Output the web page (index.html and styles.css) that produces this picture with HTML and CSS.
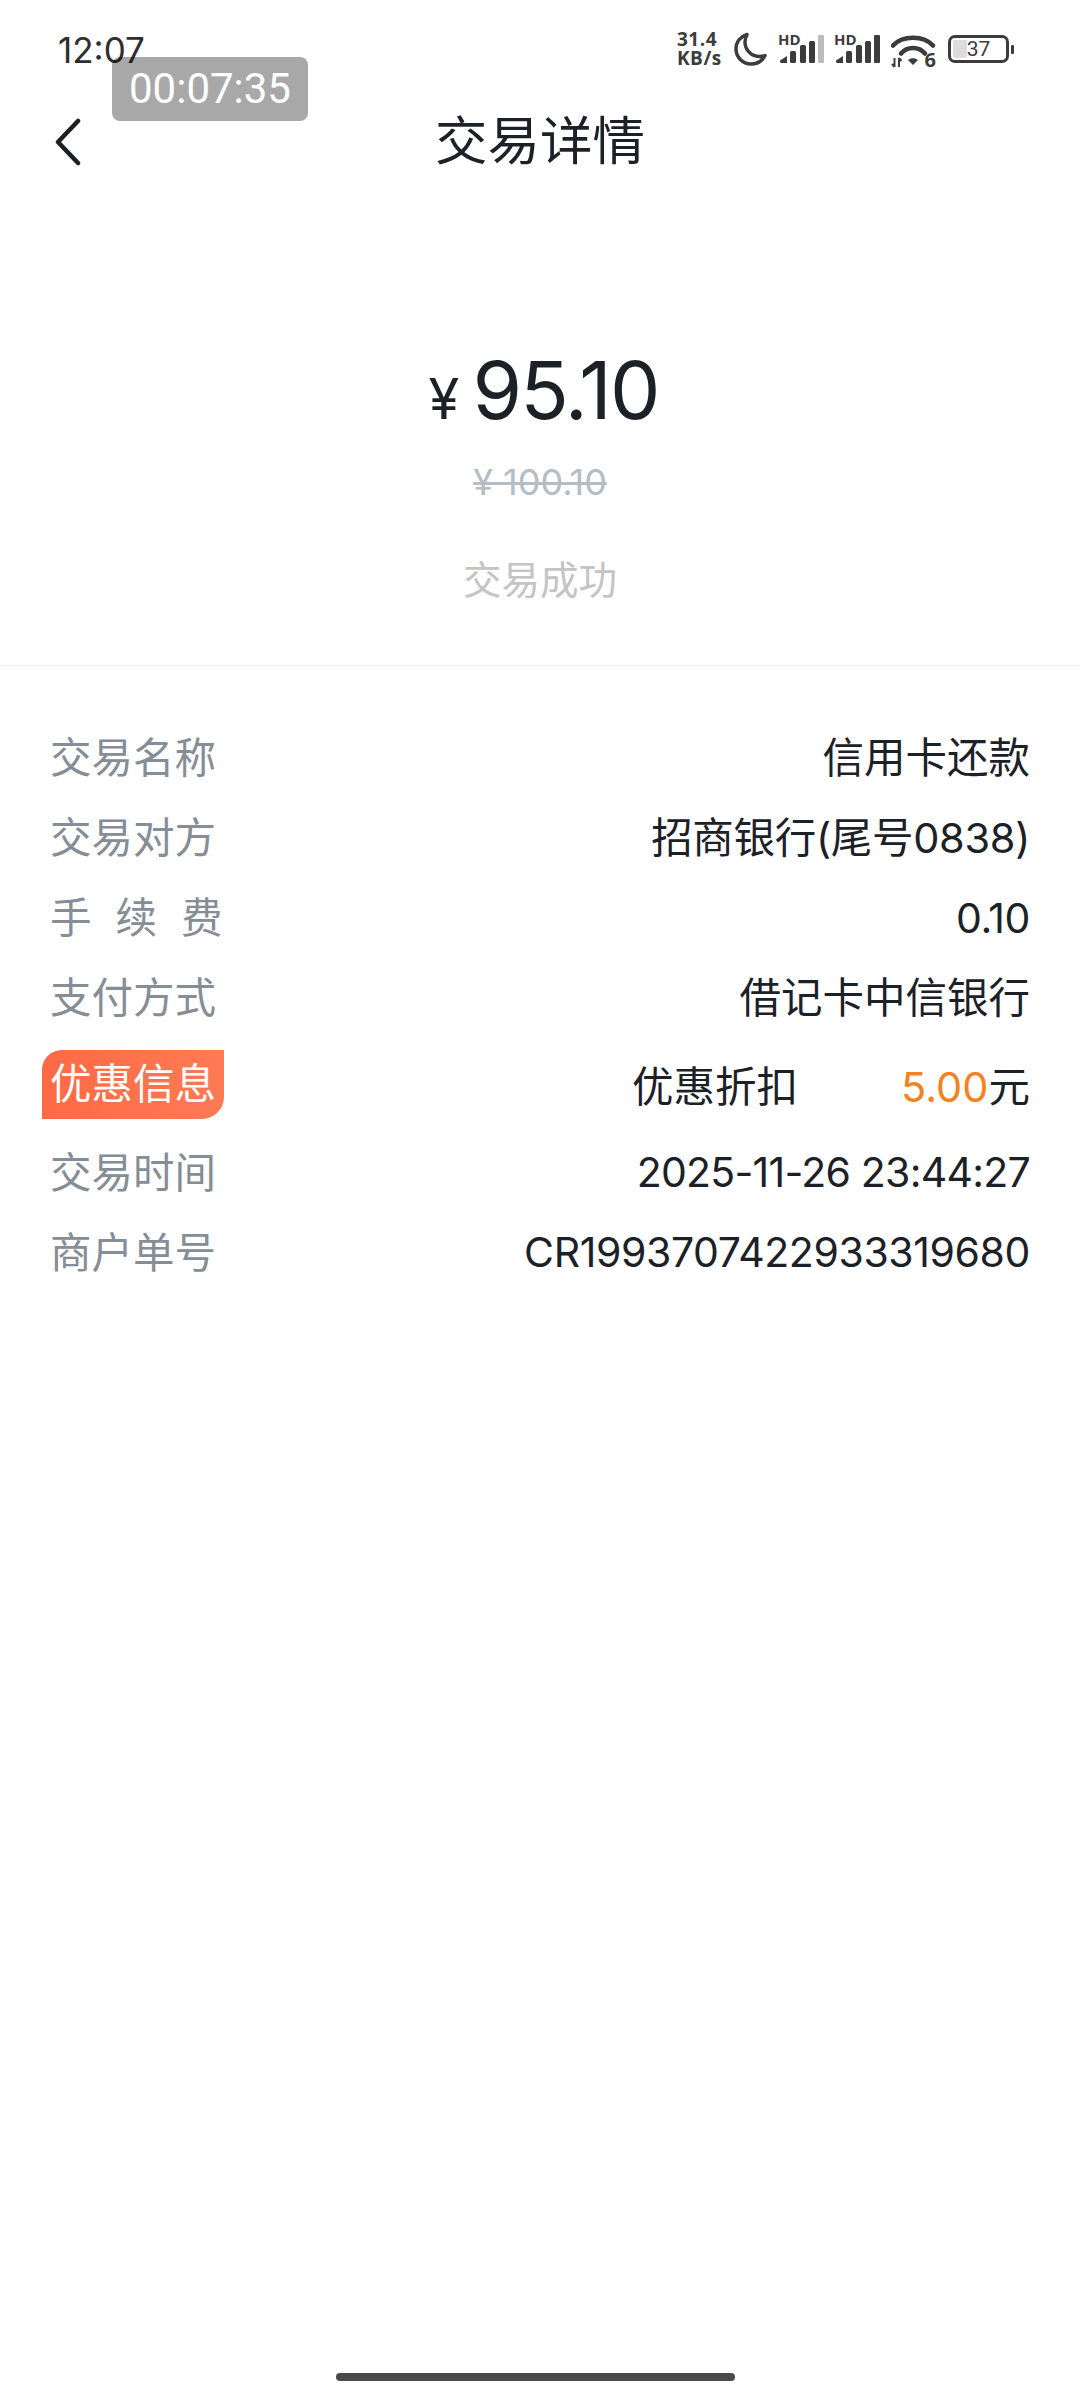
FILE: index.html
```html
<!DOCTYPE html>
<html lang="zh-CN">
<head>
    <meta charset="UTF-8">
    <meta name="viewport" content="width=device-width, initial-scale=1.0">
    <title>交易详情</title>
    <link rel="stylesheet" href="styles.css">
</head>
<body>
    <div class="pagina">
        <div class="estado">
            <span class="hora">12:07</span>
            <div class="iconos">
                <div class="velocidad"><span>31.4</span><span>KB/s</span></div>
                <svg class="luna" width="33" height="34" viewBox="0 0 33 34">
                    <path d="M13 2.500C6.500 4.500 2 10 2 17c0 8 6.500 15 15 15 6.500 0 11.500-3.500 14-8.500-1.500.6-3.500 1-5.500 1C17.500 24.500 11 18 11 10c0-2.700.7-5.300 2-7.500Z" fill="none" stroke="#3c3c3c" stroke-width="3.500" stroke-linejoin="round"/>
                </svg>
                <div class="senal">
                    <span class="hd">HD</span>
                    <svg width="46" height="32" viewBox="0 0 46 32">
                        <path d="M2 27.500 9 23v7H3.500A1.500 1.500 0 0 1 2 28.500Z" fill="#3c3c3c"/>
                        <rect x="12" y="18" width="6" height="12" rx="1.500" fill="#3c3c3c"/>
                        <rect x="22" y="12" width="6" height="18" rx="1.500" fill="#3c3c3c"/>
                        <rect x="31" y="8" width="6" height="22" rx="1.500" fill="#3c3c3c"/>
                        <rect x="40" y="2" width="6" height="28" rx="1" fill="#bcbcbc"/>
                    </svg>
                </div>
                <div class="senal">
                    <span class="hd">HD</span>
                    <svg width="46" height="32" viewBox="0 0 46 32">
                        <path d="M2 27.500 9 23v7H3.500A1.500 1.500 0 0 1 2 28.500Z" fill="#3c3c3c"/>
                        <rect x="12" y="18" width="6" height="12" rx="1.500" fill="#3c3c3c"/>
                        <rect x="22" y="12" width="6" height="18" rx="1.500" fill="#3c3c3c"/>
                        <rect x="31" y="8" width="6" height="22" rx="1.500" fill="#3c3c3c"/>
                        <rect x="40" y="2" width="6" height="28" rx="1" fill="#3c3c3c"/>
                    </svg>
                </div>
                <div class="wifi">
                    <svg width="45" height="34" viewBox="0 0 45 34">
                        <path d="M2 11.500C11 1 33 1 42 11.500" fill="none" stroke="#3c3c3c" stroke-width="4.500" stroke-linecap="round"/>
                        <path d="M10 19.500C16 12 28 12 34 19.500" fill="none" stroke="#3c3c3c" stroke-width="4.500" stroke-linecap="round"/>
                        <path d="M17 26c3-2.500 7-2.500 10 0l-5 5Z" fill="#3c3c3c"/>
                        <path d="M3.500 24v9M1 30l2.500 3M8 33v-9M10.500 27 8 24" fill="none" stroke="#3c3c3c" stroke-width="2"/>
                    </svg>
                    <span class="wifi-num">6</span>
                </div>
                <div class="bateria">
                    <div class="bateria-caja">
                        <div class="bateria-nivel"></div>
                        <span class="bateria-num">37</span>
                    </div>
                    <div class="bateria-punta"></div>
                </div>
            </div>
        </div>

        <div class="cronometro">00:07:35</div>

        <div class="cabecera">
            <svg class="volver" width="26" height="48" viewBox="0 0 26 48">
                <path d="M23 3 3 24l20 21" fill="none" stroke="#1c2127" stroke-width="4.500" stroke-linecap="round" stroke-linejoin="round"/>
            </svg>
            <h1>交易详情</h1>
        </div>

        <div class="resumen">
            <div class="importe"><span class="moneda">¥</span><span>95.10</span></div>
            <div class="original">¥ 100.10</div>
            <div class="resultado">交易成功</div>
        </div>

        <div class="detalle">
            <div class="fila"><span class="etiqueta">交易名称</span><span>信用卡还款</span></div>
            <div class="fila"><span class="etiqueta">交易对方</span><span class="banco">招商银行(尾号0838)</span></div>
            <div class="fila"><span class="etiqueta separada">手续费</span><span class="num comision">0.10</span></div>
            <div class="fila"><span class="etiqueta">支付方式</span><span>借记卡中信银行</span></div>
            <div class="fila fila-oferta">
                <span class="insignia">优惠信息</span>
                <div class="oferta">
                    <span>优惠折扣</span>
                    <span><span class="naranja">5.00</span>元</span>
                </div>
            </div>
            <div class="fila"><span class="etiqueta">交易时间</span><span class="num fecha">2025-11-26 23:44:27</span></div>
            <div class="fila"><span class="etiqueta">商户单号</span><span class="num">CR1993707422933319680</span></div>
        </div>

        <div class="barra-inicio"></div>
    </div>
</body>
</html>
```

FILE: styles.css
```css
* {
    box-sizing: border-box;
}

body {
    margin: 0;
    background-color: #fff;
    font-family: Inter, "Noto Sans CJK SC", sans-serif;
    color: #1c2127;
}

.pagina {
    position: relative;
    width: 1080px;
    height: 2400px;
    display: flex;
    flex-direction: column;
    overflow: hidden;
}

.estado {
    height: 100px;
    padding: 30px 66px 0 58px;
    display: flex;
    justify-content: space-between;
    align-items: flex-start;
}

.hora {
    font-size: 35px;
    line-height: 40px;
    color: #2e2e2e;
}

.iconos {
    display: flex;
    align-items: center;
    height: 38px;
}

.velocidad {
    display: flex;
    flex-direction: column;
    width: 47px;
    font-family: "Open Sans", sans-serif;
    font-size: 19px;
    line-height: 19px;
    font-weight: 700;
    letter-spacing: 0.500px;
    color: #3c3c3c;
    margin-right: 10px;
    white-space: nowrap;
}

.luna {
    margin-right: 11px;
}

.senal {
    position: relative;
    width: 46px;
    height: 32px;
    margin-right: 10px;
}

.senal svg {
    display: block;
}

.hd {
    position: absolute;
    left: 0;
    top: -1px;
    font-family: "Open Sans", sans-serif;
    font-size: 15px;
    line-height: 14px;
    font-weight: 700;
    color: #3c3c3c;
}

.wifi {
    position: relative;
    width: 45px;
    height: 34px;
    margin-left: 1px;
    margin-right: 12px;
    margin-top: 3px;
}

.wifi svg {
    display: block;
}

.wifi-num {
    position: absolute;
    right: 0;
    top: 18px;
    font-family: "Open Sans", sans-serif;
    font-size: 20px;
    line-height: 16px;
    font-weight: 700;
    color: #3c3c3c;
}

.bateria {
    display: flex;
    align-items: center;
    gap: 2px;
}

.bateria-caja {
    position: relative;
    width: 61px;
    height: 28px;
    border: 3px solid #3c3c3c;
    border-radius: 7px;
    display: flex;
    justify-content: center;
    align-items: center;
}

.bateria-nivel {
    position: absolute;
    left: 2px;
    top: 2px;
    bottom: 2px;
    width: 14px;
    background-color: #dcdcdc;
    border-radius: 2px;
}

.bateria-num {
    position: relative;
    font-family: Roboto, sans-serif;
    font-size: 21px;
    line-height: 22px;
    color: #3c3c3c;
}

.bateria-punta {
    width: 3px;
    height: 9px;
    background-color: #3c3c3c;
    border-radius: 1px;
}

.cronometro {
    position: absolute;
    left: 112px;
    top: 57px;
    width: 196px;
    height: 64px;
    background-color: rgba(0, 0, 0, 0.34);
    border-radius: 8px;
    color: #fff;
    font-family: Roboto, sans-serif;
    font-size: 42px;
    line-height: 64px;
    text-align: center;
}

.cabecera {
    position: relative;
    height: 82px;
    display: flex;
    align-items: center;
    justify-content: center;
}

.volver {
    position: absolute;
    left: 55px;
    top: 18px;
}

h1 {
    margin: 0;
    font-size: 52.500px;
    font-weight: 400;
    line-height: 84px;
}

.resumen {
    height: 484px;
    padding-top: 163px;
    border-bottom: 1px solid #ececec;
    display: flex;
    flex-direction: column;
    align-items: center;
}

.importe {
    display: flex;
    align-items: baseline;
    gap: 15px;
    height: 90px;
    padding-left: 7px;
    font-size: 80px;
    line-height: 90px;
    letter-spacing: -1.800px;
}

.moneda {
    font-size: 56px;
}

.original {
    margin-top: 27px;
    font-size: 36px;
    line-height: 40px;
    color: #b4bcc4;
    text-decoration: line-through;
}

.resultado {
    margin-top: 56px;
    font-size: 38.500px;
    line-height: 44px;
    color: #c4c4c4;
}

.detalle {
    padding: 49px 50px 0;
    font-size: 41.500px;
}

.fila {
    height: 80px;
    display: flex;
    justify-content: space-between;
    align-items: center;
}

.etiqueta {
    color: #858d96;
}

.banco {
    letter-spacing: -0.300px;
}

.num {
    padding-top: 4px;
    font-size: 41px;
    letter-spacing: -0.400px;
}

.comision {
    padding-top: 6px;
}

.fecha {
    letter-spacing: -0.750px;
}

.separada {
    letter-spacing: 24px;
    margin-right: -24px;
}

.fila-oferta {
    height: 92px;
    margin-top: 3px;
}

.insignia {
    margin-left: -8px;
    padding: 0 8px;
    height: 69px;
    line-height: 69px;
    color: #fff;
    background: linear-gradient(90deg, #ff6a45, #ff7a55);
    border-radius: 20px 0 22px 0;
}

.oferta {
    width: 398px;
    display: flex;
    justify-content: space-between;
}

.naranja {
    color: #f58220;
}

.barra-inicio {
    position: absolute;
    left: 336px;
    bottom: 19px;
    width: 399px;
    height: 8px;
    border-radius: 4px;
    background-color: #4a4a4a;
}
```
